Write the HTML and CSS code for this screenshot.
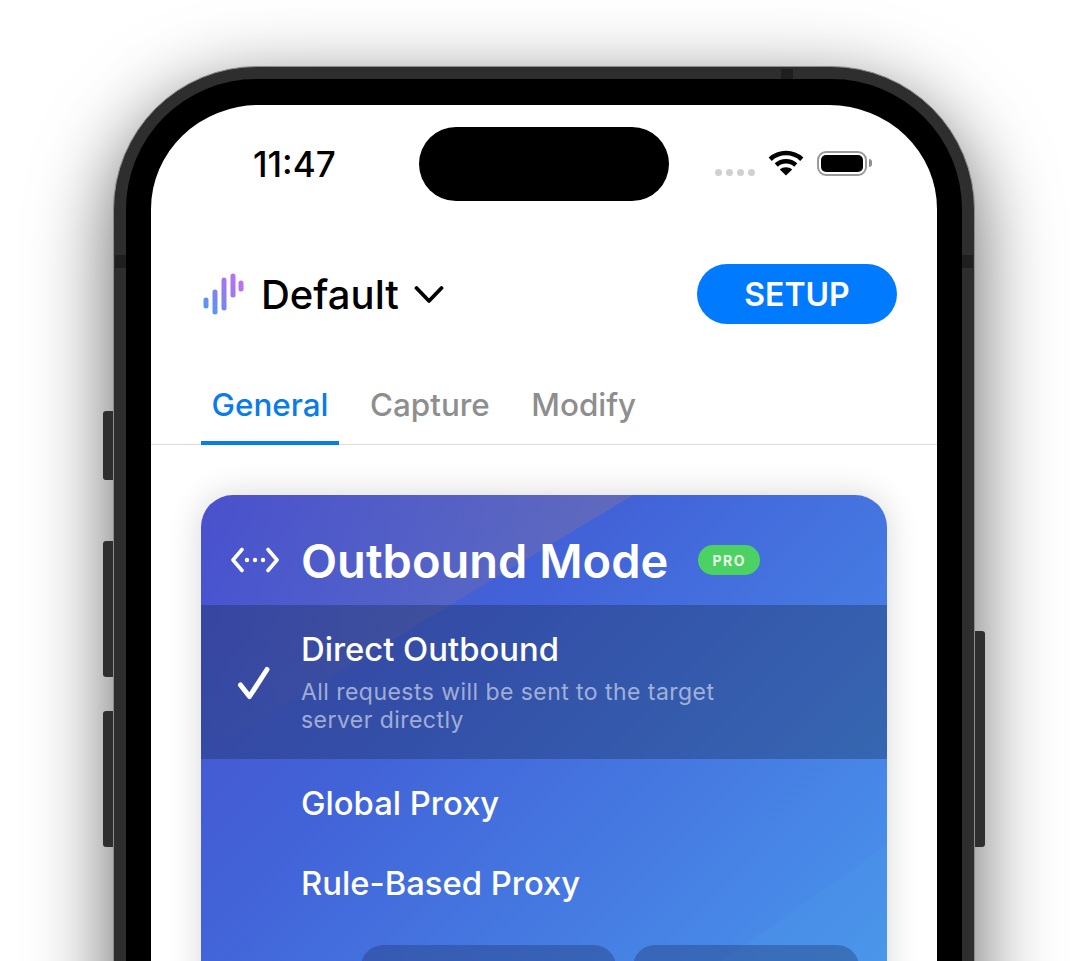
FILE: index.html
```html
<!DOCTYPE html>
<html lang="en">
<head>
<meta charset="utf-8">
<title>Outbound Mode</title>
<link rel="stylesheet" href="styles.css">
</head>
<body>
<div class="phone">
  <span class="side side-l1"></span>
  <span class="side side-l2"></span>
  <span class="side side-l3"></span>
  <span class="side side-r1"></span>
  <span class="band band-l"></span>
  <span class="band band-r"></span>
  <span class="band-top"></span>
  <div class="bezel">
    <div class="screen">
      <div class="status">
        <div class="time">11:47</div>
        <div class="island"></div>
        <div class="indicators">
          <div class="dots"><i></i><i></i><i></i><i></i></div>
          <svg class="wifi" width="36" height="26" viewBox="0 0 36 26">
            <path d="M2.2 9.2C11.2 1 24.8 1 33.8 9.2" fill="none" stroke="#000" stroke-width="4.6" stroke-linecap="butt"/>
            <path d="M8.2 15C13.8 10 22.2 10 27.8 15" fill="none" stroke="#000" stroke-width="4.6"/>
            <path d="M18 25.5L11.8 19.5C15.2 16.6 20.8 16.6 24.2 19.5Z" fill="#000"/>
          </svg>
          <div class="battery"><div class="battery-fill"></div></div>
          <div class="battery-cap"></div>
        </div>
      </div>
      <div class="header">
        <div class="brand">
          <svg class="logo" width="42" height="44" viewBox="0 0 42 44">
            <defs>
              <linearGradient id="lg" gradientUnits="userSpaceOnUse" x1="4" y1="40" x2="38" y2="4">
                <stop offset="0" stop-color="#4a9bf2"/>
                <stop offset="0.5" stop-color="#8a7ef0"/>
                <stop offset="1" stop-color="#c86ee8"/>
              </linearGradient>
            </defs>
            <g stroke="url(#lg)" stroke-width="5" stroke-linecap="round" fill="none">
              <line x1="4" y1="27" x2="4" y2="33"/>
              <line x1="13" y1="19" x2="13" y2="39"/>
              <line x1="22" y1="7" x2="22" y2="35"/>
              <line x1="31" y1="3" x2="31" y2="22"/>
              <line x1="39" y1="10" x2="39" y2="16"/>
            </g>
          </svg>
          <span class="brand-name">Default</span>
          <svg class="chevron" width="30" height="20" viewBox="0 0 30 20">
            <path d="M2.5 3L15 16L27.5 3" fill="none" stroke="#000" stroke-width="3.8" stroke-linecap="round" stroke-linejoin="round"/>
          </svg>
        </div>
        <div class="setup">SETUP</div>
      </div>
      <div class="tabs">
        <div class="tab active">General</div>
        <div class="tab">Capture</div>
        <div class="tab">Modify</div>
      </div>
      <div class="card">
        <div class="card-head">
          <svg class="mode-icon" width="48" height="26" viewBox="0 0 48 26">
            <path d="M11 2.5L2 13L11 23.500M37 2.500L46 13L37 23.500" fill="none" stroke="#fff" stroke-width="3.6" stroke-linecap="round" stroke-linejoin="round"/>
            <circle cx="16" cy="13" r="2.2" fill="#fff"/>
            <circle cx="24" cy="13" r="2.2" fill="#fff"/>
            <circle cx="32" cy="13" r="2.2" fill="#fff"/>
          </svg>
          <h1 class="card-title">Outbound Mode</h1>
          <span class="pro">PRO</span>
        </div>
        <div class="option selected">
          <svg class="check" width="36" height="36" viewBox="0 0 36 36">
            <path d="M4.500 20L13.500 31.500L31 4.500" fill="none" stroke="#fff" stroke-width="5" stroke-linecap="round" stroke-linejoin="round"/>
          </svg>
          <div class="option-text">
            <div class="option-name">Direct Outbound</div>
            <div class="option-desc">All requests will be sent to the target<br>server directly</div>
          </div>
        </div>
        <div class="option plain first"><div class="option-name">Global Proxy</div></div>
        <div class="option plain"><div class="option-name">Rule-Based Proxy</div></div>
        <div class="actions">
          <div class="action action-a"></div>
          <div class="action action-b"></div>
        </div>
      </div>
    </div>
  </div>
</div>
</body>
</html>
```
FILE: styles.css
```css
* { box-sizing: border-box; }
html, body { margin: 0; height: 961px; overflow: hidden; background: #fff; }
body { padding: 66px 113px 0; font-family: Inter, "Liberation Sans", sans-serif; }

.phone {
  position: relative;
  width: 862px;
  height: 1100px;
  padding: 12px;
  background: #2e2e2e;
  border: 1px solid #8c8c8c;
  border-radius: 144px;
  box-shadow: 0 24px 80px rgba(0,0,0,.62);
}
.side { position: absolute; width: 10px; background: #2e2e2e; }
.side-l1 { left: -11px; top: 344px; height: 69px; border-radius: 3px 0 0 3px; }
.side-l2 { left: -11px; top: 474px; height: 136px; border-radius: 3px 0 0 3px; }
.side-l3 { left: -11px; top: 644px; height: 136px; border-radius: 3px 0 0 3px; }
.side-r1 { right: -11px; top: 564px; height: 216px; border-radius: 0 3px 3px 0; }
.band { position: absolute; top: 188px; width: 11px; height: 13px; background: #1f1f1f; }
.band-l { left: 1px; }
.band-r { right: 1px; }
.band-top { position: absolute; top: 2px; left: 667px; width: 12px; height: 10px; background: #1f1f1f; }

.bezel {
  height: 100%;
  padding: 26px 25px 0;
  background: #000;
  border-radius: 130px;
}
.screen {
  height: 100%;
  padding-top: 22px;
  background: #fff;
  border-radius: 108px / 104px;
  overflow: hidden;
}

.status { display: flex; align-items: center; height: 74px; padding-left: 102px; }
.time { width: 166px; font-size: 35px; font-weight: 500; color: #000; }
.island { width: 250px; height: 74px; border-radius: 37px; background: #000; }
.indicators { display: flex; align-items: center; margin-left: 46px; padding-bottom: 2px; }
.dots { display: flex; gap: 4px; margin-top: 18px; margin-right: 14px; }
.dots i { display: block; width: 7px; height: 7px; border-radius: 50%; background: #d0d0d0; }
.wifi { margin-right: 13px; margin-left: -1px; margin-top: -1px; }
.battery { width: 50px; height: 25px; padding: 2px; border: 2px solid #9a9a9a; border-radius: 9px; }
.battery-fill { height: 100%; border-radius: 5px; background: #000; }
.battery-cap { width: 3px; height: 8px; margin-left: 2px; background: #8f8f8f; border-radius: 0 3px 3px 0; }

.header { display: flex; align-items: center; justify-content: space-between; height: 60px; margin-top: 63px; padding: 0 40px 0 50px; }
.brand { display: flex; align-items: center; }
.logo { margin: 2px 0 0 1px; }
.brand-name { margin-left: 17px; font-size: 40px; font-weight: 550; color: #000; }
.chevron { margin-left: 15px; margin-top: 1px; }
.setup {
  width: 200px; height: 60px;
  display: flex; align-items: center; justify-content: center;
  background: #007aff; color: #fff;
  border-radius: 30px;
  font-size: 32px; font-weight: 600;
}

.tabs { display: flex; gap: 19.5px; height: 121px; padding: 0 50px; border-bottom: 1px solid #dcdcdc; align-items: flex-end; }
.tab { height: 80px; margin-bottom: -1px; padding: 22px 11px 0; font-size: 31.4px; font-weight: 500; color: #8e8e8e; border-bottom: 4px solid transparent; line-height: 36px; }
.tab:first-child { padding-left: 10.5px; }
.tab.active { color: #0a7ce8; border-bottom-color: #0a7ce8; }

.card {
  position: relative;
  width: 686px;
  height: 560px;
  margin: 50px 0 0 50px;
  border-radius: 32px 32px 0 0;
  color: #fff;
  box-shadow: 0 0 34px rgba(0,0,0,.16);
  overflow: hidden;
  background: linear-gradient(135deg, #4a50cc 0%, #4263d8 35%, #4785e6 75%, #4a9aec 100%);
}
.card::before {
  content: "";
  position: absolute;
  inset: 0;
  background: linear-gradient(90deg, rgba(160,120,130,0) 0, rgba(160,120,130,.32) 432px);
  clip-path: polygon(0 0, 432px 0, 0 260px);
}
.card::after {
  content: "";
  position: absolute;
  inset: 0;
  background: rgba(90,190,240,.08);
  clip-path: polygon(686px 350px, 686px 560px, 386px 560px);
}
.card > * { position: relative; z-index: 1; }
.card-head { display: flex; align-items: center; height: 110px; padding: 20px 0 0 30px; }
.mode-icon { flex: none; }
.card-title { margin: 0 0 0 22px; font-size: 47px; font-weight: 600; white-space: nowrap; }
.pro {
  width: 62px; height: 30px; margin-left: 30px;
  display: flex; align-items: center; justify-content: center;
  background: #4cd263; border-radius: 15px;
  font-size: 14px; font-weight: 700; letter-spacing: 1.5px; color: #e9fbe9;
}
.option { padding-left: 100px; }
.option.selected { height: 154px; padding-top: 22px; background: rgba(20,40,70,.33); display: flex; }
.check { position: absolute; left: 35px; top: 60px; }
.option.plain { height: 80px; display: flex; align-items: center; }
.option.first { margin-top: 4px; }
.option-name { font-size: 32.8px; font-weight: 450; line-height: 44px; color: #fff; }
.option-desc { margin-top: 7px; font-size: 23px; line-height: 28px; letter-spacing: .45px; color: rgba(255,255,255,.55); }

.actions { display: flex; gap: 17px; margin-top: 22px; padding-left: 160px; }
.action { height: 60px; border-radius: 22px; background: rgba(30,50,100,.35); }
.action-a { width: 255px; }
.action-b { width: 226px; }
```
